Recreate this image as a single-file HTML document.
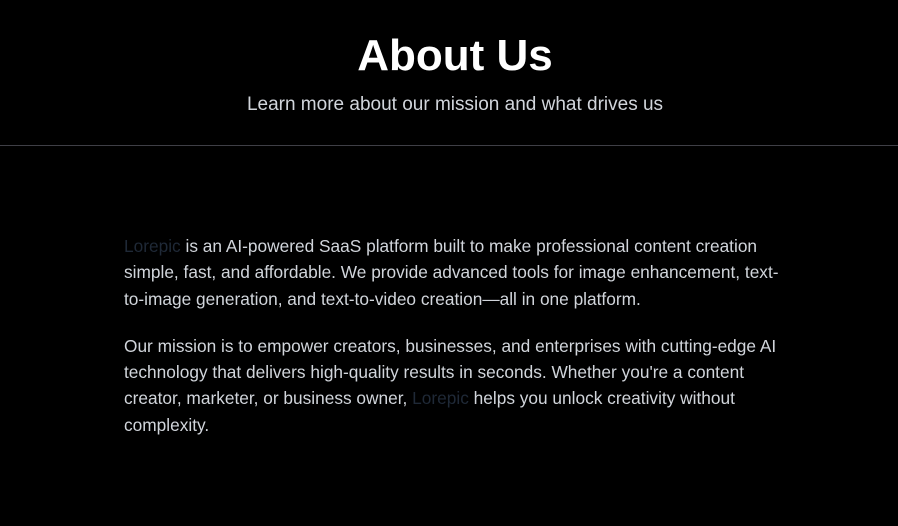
<!DOCTYPE html>
<html><head><style>
html,body{margin:0;padding:0;background:#000;width:898px;height:526px;overflow:hidden;font-family:"Liberation Sans",sans-serif;}
h1{position:absolute;top:30px;left:12px;width:886px;text-align:center;margin:0;font-size:44px;line-height:52px;font-weight:bold;color:#fff;}
.sub{position:absolute;top:93px;left:12px;width:886px;text-align:center;font-size:19px;line-height:24px;color:#d1d5db;}
.hr{position:absolute;top:145px;left:0;width:898px;height:1px;background:#3f3f46;}
.c{position:absolute;left:124px;top:233px;width:700px;font-size:17.3px;line-height:26.3px;color:#d1d5db;white-space:nowrap;}
.c p{margin:0 0 21px;}
.b{color:#1f2937;}
</style></head><body>
<h1>About Us</h1>
<div class="sub">Learn more about our mission and what drives us</div>
<div class="hr"></div>
<div class="c">
<p><span class="b">Lorepic</span> is an AI-powered SaaS platform built to make professional content creation<br>simple, fast, and affordable. We provide advanced tools for image enhancement, text-<br>to-image generation, and text-to-video creation—all in one platform.</p>
<p>Our mission is to empower creators, businesses, and enterprises with cutting-edge AI<br>technology that delivers high-quality results in seconds. Whether you're a content<br>creator, marketer, or business owner, <span class="b">Lorepic</span> helps you unlock creativity without<br>complexity.</p>
</div>
</body></html>
